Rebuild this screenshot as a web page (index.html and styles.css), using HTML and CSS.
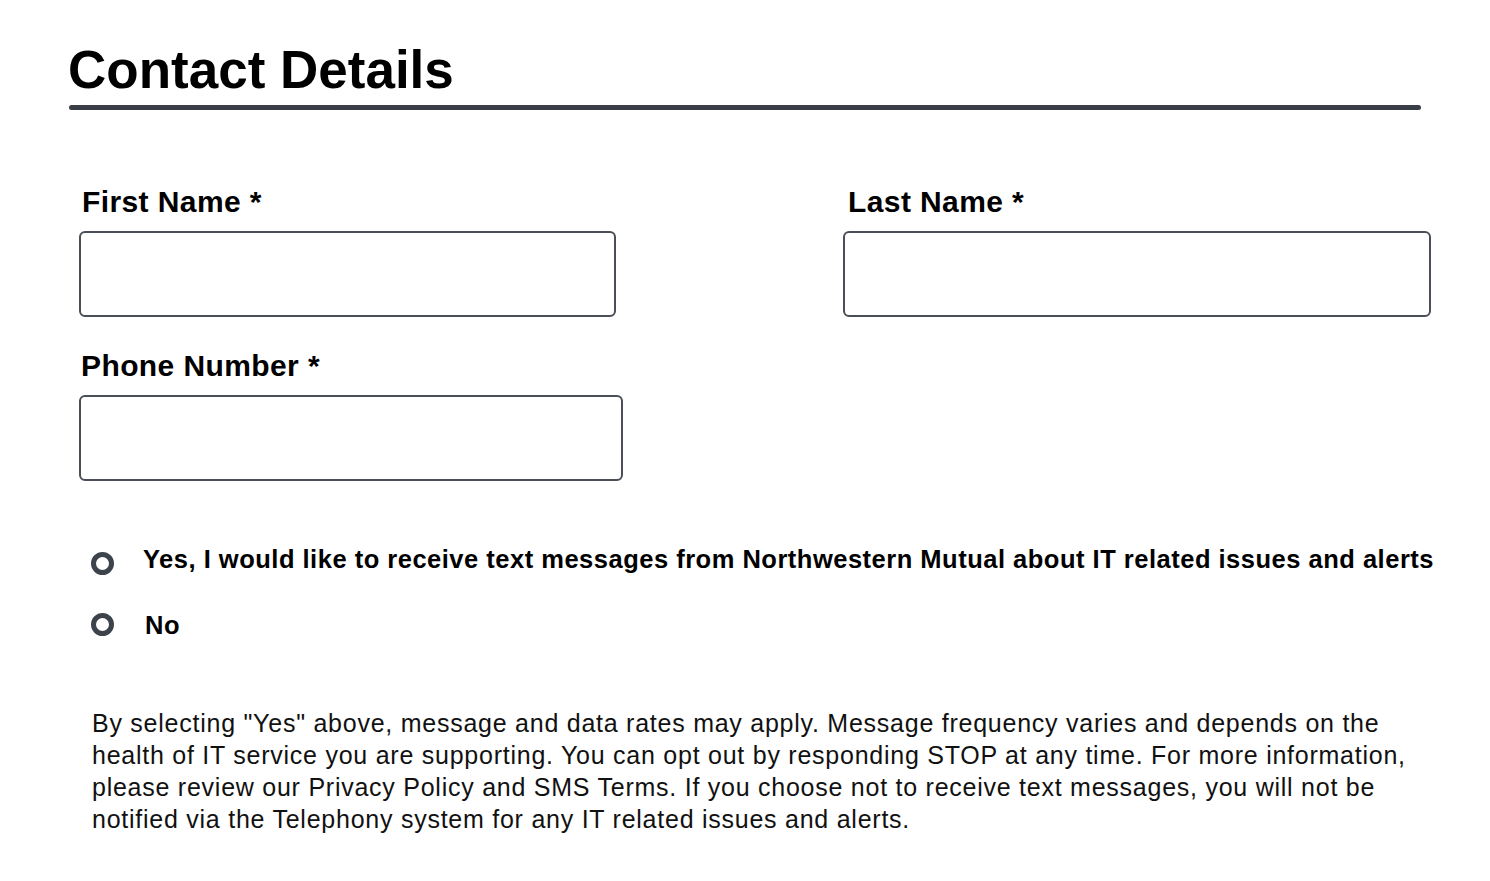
FILE: index.html
```html
<!DOCTYPE html>
<html>
<head>
<meta charset="utf-8">
<link rel="stylesheet" href="styles.css">
</head>
<body>
<div class="page">
  <h1 class="title">Contact Details</h1>
  <div class="rule"></div>
  <form class="form">
    <div class="grid">
      <div class="field field-first">
        <label class="label">First Name *</label>
        <input class="input" type="text">
      </div>
      <div class="field field-last">
        <label class="label label-last">Last Name *</label>
        <input class="input" type="text">
      </div>
      <div class="field field-phone">
        <label class="label label-phone">Phone Number *</label>
        <input class="input" type="text">
      </div>
    </div>
    <div class="radios">
      <label class="radio radio-yes"><span class="dot"></span><span class="radio-text">Yes, I would like to receive text messages from Northwestern Mutual about IT related issues and alerts</span></label>
      <label class="radio radio-no"><span class="dot"></span><span class="radio-text radio-text-no">No</span></label>
    </div>
    <p class="note">By selecting "Yes" above, message and data rates may apply. Message frequency varies and depends on the health of IT service you are supporting. You can opt out by responding STOP at any time. For more information, please review our Privacy Policy and SMS Terms. If you choose not to receive text messages, you will not be notified via the Telephony system for any IT related issues and alerts.</p>
  </form>
</div>
</body>
</html>
```
FILE: styles.css
```css
html, body {
  margin: 0;
  padding: 0;
  background: #ffffff;
}
body {
  font-family: "Liberation Sans", Arial, sans-serif;
  color: #000;
}
.page {
  padding: 40px 0 0 68px;
  width: 1354px;
}
.title {
  margin: 0;
  font-size: 53px;
  line-height: 60px;
  font-weight: 700;
}
.rule {
  margin: 5px 0 0 1px;
  width: 1352px;
  height: 5px;
  border-radius: 3px;
  background: #3a3f47;
}
.form {
  padding: 75px 0 0 11px;
}
.grid {
  display: grid;
  grid-template-columns: 544px 588px;
  column-gap: 220px;
  row-gap: 32px;
}
.field {
  display: flex;
  flex-direction: column;
}
.field-first .input {
  width: 537px;
}
.label {
  font-size: 30px;
  letter-spacing: 0.4px;
  font-weight: 700;
  line-height: 34px;
  padding-left: 3px;
  margin-bottom: 12px;
}
.label-last { padding-left: 5px; }
.label-phone { padding-left: 2px; }
.input {
  box-sizing: border-box;
  height: 86px;
  width: 100%;
  border: 2px solid #4a4f57;
  border-radius: 6px;
  background: #fff;
  margin: 0;
  padding: 0 12px;
  font-size: 24px;
  font-family: inherit;
}
.radios {
  display: flex;
  flex-direction: column;
  gap: 35px;
  padding: 63px 0 0 12px;
}
.radio {
  display: flex;
  align-items: flex-start;
  gap: 29px;
  font-size: 25.5px;
  letter-spacing: 0.5px;
  font-weight: 700;
  line-height: 30px;
  white-space: nowrap;
}
.dot {
  box-sizing: border-box;
  width: 23px;
  height: 23px;
  border: 5px solid #3d434b;
  border-radius: 50%;
  flex: none;
  margin-top: 8px;
}
.radio-no .dot { margin-top: 3px; }
.radio-text-no { margin-left: 2px; }
.note {
  margin: 67px 0 0 13px;
  font-size: 25px;
  letter-spacing: 0.75px;
  line-height: 32px;
  width: 1330px;
  color: #111;
}
```
